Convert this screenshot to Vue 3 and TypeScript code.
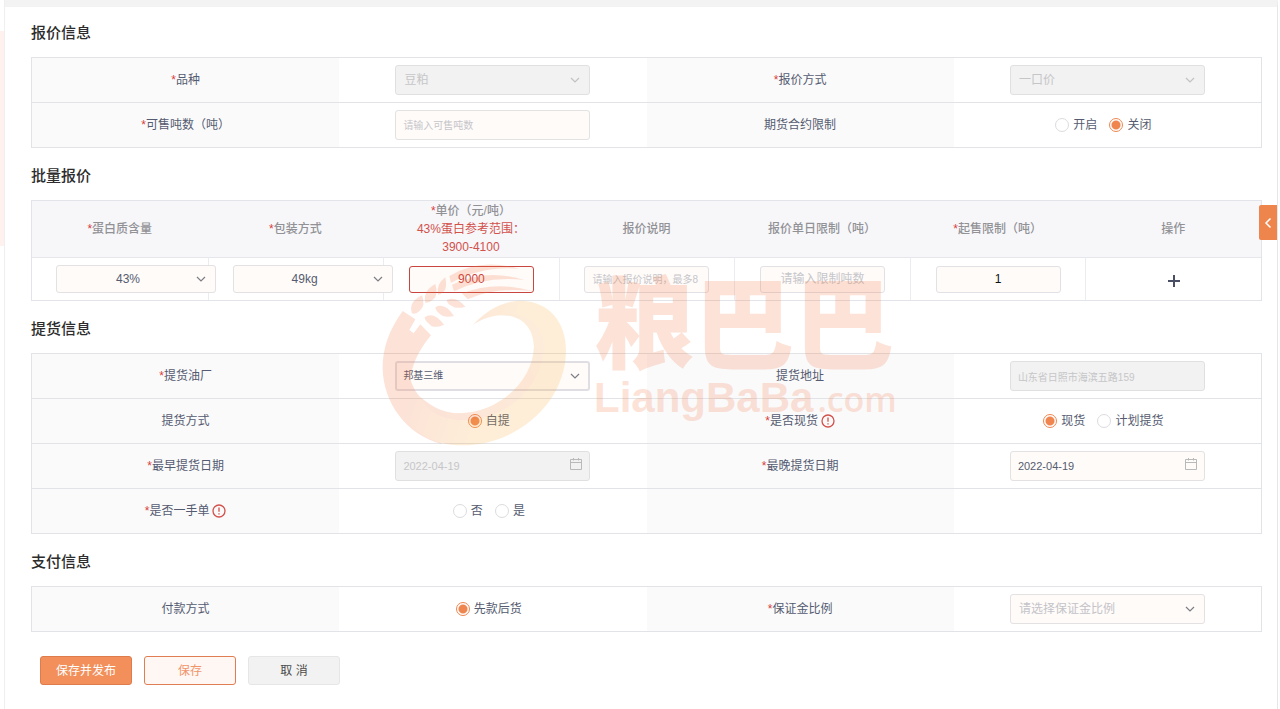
<script setup lang="ts">
import { reactive } from 'vue'

interface Option {
  value: string
  text: string
}

interface Field {
  key: string
  label: string
  kind: 'select' | 'text' | 'date' | 'radio' | 'none'
  required?: boolean
  hint?: boolean
  disabled?: boolean
  small?: boolean
  placeholder?: string
  options?: Option[]
}

interface Column {
  key: string
  label: string
  kind: 'select' | 'text' | 'action'
  required?: boolean
  error?: boolean
  small?: boolean
  placeholder?: string
  options?: string[]
}

const form = reactive<Record<string, string>>({
  variety: 'meal',
  method: 'fixed',
  tons: '',
  futures: 'off',
  factory: 'bangji',
  address: '山东省日照市海滨五路159',
  pickup: 'self',
  spot: 'spot',
  earliest: '2022-04-19',
  latest: '2022-04-19',
  firstHand: '',
  payment: 'prepay',
  deposit: '',
})

const row = reactive<Record<string, string>>({
  protein: '43%',
  pack: '49kg',
  price: '9000',
  note: '',
  dailyLimit: '',
  minSale: '1',
})

const quoteFields: Field[] = [
  { key: 'variety', label: '品种', kind: 'select', required: true, disabled: true, options: [{ value: 'meal', text: '豆粕' }] },
  { key: 'method', label: '报价方式', kind: 'select', required: true, disabled: true, options: [{ value: 'fixed', text: '一口价' }] },
  { key: 'tons', label: '可售吨数（吨）', kind: 'text', required: true, placeholder: '请输入可售吨数' },
  { key: 'futures', label: '期货合约限制', kind: 'radio', options: [{ value: 'on', text: '开启' }, { value: 'off', text: '关闭' }] },
]

const pickupFields: Field[] = [
  { key: 'factory', label: '提货油厂', kind: 'select', required: true, small: true, options: [{ value: 'bangji', text: '邦基三维' }] },
  { key: 'address', label: '提货地址', kind: 'text', disabled: true },
  { key: 'pickup', label: '提货方式', kind: 'radio', options: [{ value: 'self', text: '自提' }] },
  { key: 'spot', label: '是否现货', kind: 'radio', required: true, hint: true, options: [{ value: 'spot', text: '现货' }, { value: 'plan', text: '计划提货' }] },
  { key: 'earliest', label: '最早提货日期', kind: 'date', required: true, disabled: true },
  { key: 'latest', label: '最晚提货日期', kind: 'date', required: true },
  { key: 'firstHand', label: '是否一手单', kind: 'radio', required: true, hint: true, options: [{ value: 'no', text: '否' }, { value: 'yes', text: '是' }] },
  { key: 'blank', label: '', kind: 'none' },
]

const payFields: Field[] = [
  { key: 'payment', label: '付款方式', kind: 'radio', options: [{ value: 'prepay', text: '先款后货' }] },
  { key: 'deposit', label: '保证金比例', kind: 'select', required: true, placeholder: '请选择保证金比例', options: [{ value: '10', text: '10%' }] },
]

const columns: Column[] = [
  { key: 'protein', label: '蛋白质含量', kind: 'select', required: true, options: ['43%', '46%'] },
  { key: 'pack', label: '包装方式', kind: 'select', required: true, options: ['49kg', '70kg'] },
  { key: 'price', label: '单价（元/吨）', kind: 'text', required: true, error: true },
  { key: 'note', label: '报价说明', kind: 'text', small: true, placeholder: '请输入报价说明，最多8' },
  { key: 'dailyLimit', label: '报价单日限制（吨）', kind: 'text', placeholder: '请输入限制吨数' },
  { key: 'minSale', label: '起售限制（吨）', kind: 'text', required: true },
  { key: 'action', label: '操作', kind: 'action' },
]

const sections = [
  { title: '报价信息', fields: quoteFields },
  { title: '批量报价', fields: null },
  { title: '提货信息', fields: pickupFields },
  { title: '支付信息', fields: payFields },
]
</script>

<template>
  <div class="page">
    <aside class="rail"><div class="rail-active"></div></aside>
    <main class="panel">
      <form class="content" @submit.prevent>
        <section v-for="section in sections" :key="section.title">
          <h2>{{ section.title }}</h2>

          <div v-if="section.fields" class="fields">
            <div v-for="f in section.fields" :key="f.key" class="field">
              <div class="name">
                <template v-if="f.label">
                  <i v-if="f.required">*</i>
                  <label v-if="f.kind !== 'radio'" :for="f.key">{{ f.label }}</label>
                  <span v-else :id="f.key + '-label'">{{ f.label }}</span>
                  <svg v-if="f.hint" class="hint" viewBox="0 0 14 14" aria-hidden="true">
                    <circle cx="7" cy="7" r="6" />
                    <path d="M7 3.6v4.2M7 9.2v1.3" />
                  </svg>
                </template>
              </div>
              <div class="value">
                <div v-if="f.kind === 'select'" class="control">
                  <select
                    :id="f.key"
                    v-model="form[f.key]"
                    :disabled="f.disabled"
                    :class="{ small: f.small, focused: f.small, empty: !form[f.key] }"
                  >
                    <option v-if="f.placeholder" value="" disabled>{{ f.placeholder }}</option>
                    <option v-for="o in f.options" :key="o.value" :value="o.value">{{ o.text }}</option>
                  </select>
                  <svg class="arrow" :class="{ dim: f.disabled }" viewBox="0 0 10 10" aria-hidden="true"><path d="M1 3l4 4 4-4" /></svg>
                </div>
                <div v-else-if="f.kind === 'text'" class="control">
                  <input :id="f.key" v-model="form[f.key]" type="text" class="small" :placeholder="f.placeholder" :disabled="f.disabled" />
                </div>
                <div v-else-if="f.kind === 'date'" class="control">
                  <input :id="f.key" v-model="form[f.key]" type="text" class="date" :disabled="f.disabled" />
                  <svg class="calendar" viewBox="0 0 12 12" aria-hidden="true"><path d="M.5 1.5h11v10H.5zM.5 4.5h11M3.5 0v2.5M8.5 0v2.5" /></svg>
                </div>
                <div v-else-if="f.kind === 'radio'" class="radios" role="radiogroup" :aria-labelledby="f.key + '-label'">
                  <label v-for="o in f.options" :key="o.value">
                    <input v-model="form[f.key]" type="radio" :name="f.key" :value="o.value" />{{ o.text }}
                  </label>
                </div>
              </div>
            </div>
          </div>

          <table v-else class="batch">
            <thead>
              <tr>
                <th v-for="c in columns" :key="c.key" scope="col">
                  <i v-if="c.required">*</i>{{ c.label }}
                  <p v-if="c.error">43%蛋白参考范围：<br />3900-4100</p>
                </th>
              </tr>
            </thead>
            <tbody>
              <tr>
                <td v-for="c in columns" :key="c.key" :class="c.kind">
                  <div v-if="c.kind === 'select'" class="control">
                    <select v-model="row[c.key]" :aria-label="c.label">
                      <option v-for="o in c.options" :key="o">{{ o }}</option>
                    </select>
                    <svg class="arrow" viewBox="0 0 10 10" aria-hidden="true"><path d="M1 3l4 4 4-4" /></svg>
                  </div>
                  <input
                    v-else-if="c.kind === 'text'"
                    v-model="row[c.key]"
                    type="text"
                    :aria-label="c.label"
                    :placeholder="c.placeholder"
                    :class="{ error: c.error, small: c.small, strong: c.key === 'minSale' }"
                  />
                  <button v-else type="button" class="add" aria-label="添加">
                    <svg viewBox="0 0 14 14" aria-hidden="true"><path d="M7 1v12M1 7h12" /></svg>
                  </button>
                </td>
              </tr>
            </tbody>
          </table>
        </section>

        <div class="actions">
          <button type="submit" class="primary">保存并发布</button>
          <button type="button" class="outline">保存</button>
          <button type="button" class="plain">取 消</button>
        </div>
      </form>

      <button type="button" class="drawer" aria-label="展开">
        <svg viewBox="0 0 8 12" aria-hidden="true"><path d="M6.500 1.500L2 6l4.500 4.500" /></svg>
      </button>
    </main>

    <div class="watermark" aria-hidden="true">
      <svg class="mark" viewBox="30 210 564 564">
        <defs>
          <linearGradient id="gold" gradientUnits="userSpaceOnUse" x1="120" y1="620" x2="330" y2="700">
            <stop offset="0" stop-color="#f4743c" />
            <stop offset="1" stop-color="#fbb040" />
          </linearGradient>
          <linearGradient id="shade" gradientUnits="userSpaceOnUse" x1="150" y1="640" x2="520" y2="420">
            <stop offset="0" stop-color="#f4743c" />
            <stop offset="1" stop-color="#f79a4c" stop-opacity="0.5" />
          </linearGradient>
        </defs>
        <path fill="#f4743c" d="M98 363C58 420 38 470 38 535C40 640 110 735 215 762C190 720 150 700 130 640C105 570 130 500 183 436L151 403L131 430L118 420L136 388Z" />
        <path fill="url(#gold)" d="M308 406C350 360 400 332 455 332C540 335 588 400 588 480C588 640 440 765 280 766C180 766 110 715 90 650C70 590 90 560 120 560C130 620 190 670 270 670C390 668 490 570 492 470C490 400 440 372 390 376C355 380 330 390 308 406Z" />
        <path fill="url(#shade)" d="M390 376C440 372 490 400 492 470C490 570 390 668 270 670C230 670 190 655 150 620C180 680 240 692 290 690C420 685 520 580 522 470C520 400 460 362 390 376Z" />
        <g fill="#f4743c" transform="translate(18 198)">
          <path d="M108 172Q96 138 138 118Q150 150 130 165Q120 176 108 172Z" />
          <path d="M148 140Q140 104 178 84Q188 118 172 130Q160 142 148 140Z" />
          <path d="M186 116Q180 84 208 64Q214 96 204 106Q196 116 186 116Z" />
          <path d="M146 184Q172 164 204 206Q172 220 160 204Q148 196 146 184Z" />
          <path d="M178 154Q206 138 234 180Q204 186 192 174Q180 166 178 154Z" />
          <path d="M212 132Q240 118 268 152Q240 160 228 150Q214 144 212 132Z" />
          <path d="M220 60Q310 4 430 38Q320 28 225 80Z" />
          <path d="M228 86Q330 36 445 72Q330 58 234 106Z" />
          <path d="M258 112Q360 72 470 106Q360 92 275 130Z" />
        </g>
      </svg>
      <div class="words">
        <span class="brand">粮巴巴</span>
        <span class="site"><b>LiangBaBa</b><span>.com</span></span>
      </div>
    </div>
  </div>
</template>

<style>
body {
  margin: 0;
  background: #fff;
}
</style>

<style scoped>
.page,
.page * {
  box-sizing: border-box;
}
.page {
  position: relative;
  display: flex;
  min-height: 100vh;
  font-family: "Liberation Sans", "Noto Sans CJK SC", sans-serif;
  font-size: 12px;
  line-height: 18px;
  color: #555b70;
}
button,
input,
select {
  margin: 0;
  font: inherit;
  color: inherit;
}
i {
  font-style: normal;
  color: #d9403a;
}
.rail {
  width: 5px;
  padding-top: 31px;
  border-right: 1px solid #efefef;
}
.rail-active {
  height: 215px;
  background: #fff2ee;
}
.panel {
  position: relative;
  flex: 1;
  margin-right: 2px;
  border-top: 7px solid #f3f3f3;
  border-right: 1px solid #e6e6e6;
}
.content {
  padding: 16px 15px 24px 26px;
}
section + section {
  margin-top: 18px;
}
h2 {
  margin: 0 0 14px;
  font-size: 15px;
  line-height: 20px;
  font-weight: 500;
  color: #2c2c2c;
}
.fields {
  display: grid;
  grid-template-columns: 1fr 1fr;
  border: 1px solid #e2e3e6;
  border-bottom: 0;
}
.field {
  display: grid;
  grid-template-columns: 1fr 1fr;
  min-height: 45px;
  border-bottom: 1px solid #e2e3e6;
}
.name,
.value {
  display: flex;
  align-items: center;
  justify-content: center;
}
.name {
  background: #fafafb;
}
.hint {
  width: 14px;
  height: 14px;
  margin-left: 3px;
  fill: none;
  stroke: #d2514b;
  stroke-width: 1.3;
}
.control {
  position: relative;
  width: 195px;
}
.control select,
.control input {
  display: block;
  width: 100%;
  height: 30px;
  padding: 0 8px;
  border: 1px solid #e3e1e1;
  border-radius: 3px;
  background: #fffbf9;
  appearance: none;
  outline: none;
}
.control input {
  padding: 0 7px;
}
.control .small {
  font-size: 10px;
}
.control .date {
  font-size: 11px;
}
.control .focused {
  border: 2px solid #e0dee3;
  padding: 0 6px;
}
.control select:disabled,
.control input:disabled {
  border-color: #e0e0e0;
  background: #f2f2f2;
  color: #c6c6c8;
  opacity: 1;
}
.control .empty {
  color: #c3c3c8;
}
input::placeholder {
  color: #c6c6ca;
  opacity: 1;
}
.arrow {
  position: absolute;
  top: 50%;
  right: 10px;
  width: 10px;
  height: 10px;
  margin-top: -5px;
  fill: none;
  stroke: #7d7d84;
  stroke-width: 1.2;
  pointer-events: none;
}
.arrow.dim {
  stroke: #c2c2c4;
}
.calendar {
  position: absolute;
  top: 7px;
  right: 8px;
  width: 12px;
  height: 12px;
  fill: none;
  stroke: #b9b9b9;
  stroke-width: 1;
  pointer-events: none;
}
.radios {
  display: flex;
  gap: 12px;
  padding-right: 8px;
}
.radios label {
  display: flex;
  align-items: center;
  gap: 4px;
}
.radios input {
  width: 14px;
  height: 14px;
  border: 1px solid #dcdce0;
  border-radius: 50%;
  background: #fff;
  appearance: none;
}
.radios input:checked {
  border-color: #ef8650;
  background: radial-gradient(circle, #ef8650 4px, #fff 5px);
}
.batch {
  width: 100%;
  table-layout: fixed;
  border-collapse: separate;
  border-spacing: 0;
  border: 1px solid #e2e4ea;
}
th {
  height: 56px;
  padding: 0;
  background: #f7f7fa;
  font-weight: 500;
  color: #929296;
}
th p {
  margin: 0;
  font-weight: 400;
  color: #d2514b;
}
td {
  height: 43px;
  padding: 0;
  border-top: 1px solid #e6e7ec;
  text-align: center;
}
td + td {
  border-left: 1px solid #ebecf0;
}
td .control {
  width: 160px;
  margin-left: 24px;
}
td .control select {
  height: 28px;
  padding: 0 24px 0 8px;
  text-align: center;
  text-align-last: center;
}
td > input {
  width: 125px;
  height: 27px;
  padding: 0 7px;
  border: 1px solid #e2e1e6;
  border-radius: 3px;
  background: #fffbf9;
  text-align: center;
  outline: none;
}
td > input.small {
  font-size: 10px;
  text-align: left;
}
td > input.error {
  border-color: #c9453f;
  color: #c9453f;
}
td > input.strong {
  color: #111;
}
.add {
  padding: 4px 0 0;
  border: 0;
  background: none;
  vertical-align: middle;
}
.add svg {
  display: block;
  width: 14px;
  height: 14px;
  fill: none;
  stroke: #4a4f66;
  stroke-width: 2;
}
.actions {
  display: flex;
  gap: 12px;
  margin: 24px 0 0 9px;
}
.actions button {
  width: 92px;
  height: 29px;
  padding: 0;
  border: 1px solid #e6e6e6;
  border-radius: 3px;
  background: #f2f2f2;
  color: #4a4a4a;
}
.actions .primary {
  border-color: #de7c4c;
  background: #f28f5a;
  color: #fff;
}
.actions .outline {
  border-color: #e07d52;
  background: #fff7f4;
  color: #f0946a;
}
.drawer {
  position: absolute;
  top: 198px;
  right: 0;
  display: flex;
  align-items: center;
  justify-content: center;
  width: 18px;
  height: 35px;
  padding: 0;
  border: 0;
  border-radius: 2px 0 0 2px;
  background: #ee854d;
}
.drawer svg {
  width: 8px;
  height: 12px;
  fill: none;
  stroke: #fff;
  stroke-width: 1.5;
}
.watermark {
  position: absolute;
  top: 260px;
  left: 380px;
  display: flex;
  opacity: 0.2;
  pointer-events: none;
  color: #f4743c;
}
.mark {
  width: 188px;
  height: 188px;
}
.words {
  display: flex;
  flex-direction: column;
  margin-left: 26px;
  white-space: nowrap;
}
.brand {
  font-family: "Noto Sans CJK SC", sans-serif;
  font-size: 100px;
  line-height: 116px;
  font-weight: 900;
}
.site {
  display: flex;
  align-items: baseline;
  gap: 4px;
  line-height: 44px;
  font-family: "Open Sans", sans-serif;
  font-size: 34px;
  font-weight: 600;
}
.site b {
  font-family: "Liberation Sans", sans-serif;
  font-size: 42px;
  font-weight: 700;
}
</style>
